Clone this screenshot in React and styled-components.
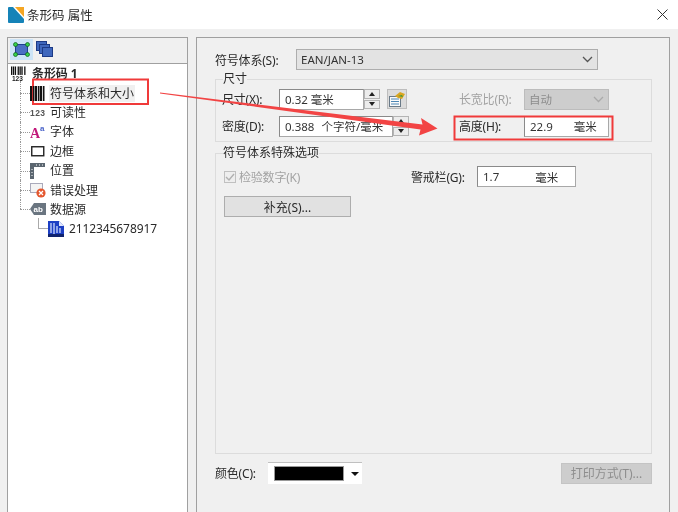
import React from "react";
import styled, { createGlobalStyle } from "styled-components";

const Global = createGlobalStyle`
  html, body { margin: 0; padding: 0; background: #f0f0f0; }
  body { font-family: "Noto Sans", "Noto Sans CJK SC", sans-serif; font-size: 12px; color: #2a2a2a; }
`;

const Dialog = styled.div`
  position: relative; width: 678px; height: 512px; overflow: hidden; background: #f0f0f0;
  filter: blur(0.4px);
`;
const TitleBar = styled.header`
  display: flex; align-items: center; height: 29px; padding: 0 10px 0 8px; background: #fff; box-sizing: border-box;
`;
const TitleText = styled.span`margin-left: 3px; font-size: 12.5px; flex: 1;`;
const Body = styled.main`display: flex; gap: 8px; padding: 8px 8px 0 7px;`;
const LeftPane = styled.aside`
  width: 181px; height: 490px; flex: none; box-sizing: border-box; border: 1px solid #a0a0a0; background: #fff;
`;
const Toolbar = styled.div`
  display: flex; align-items: flex-start; gap: 0; height: 26px; box-sizing: border-box; padding: 1px 2px; background: #f0f0f0; border-bottom: 1px solid #a0a0a0;
`;
const ToolButton = styled.div`
  width: 23px; height: 21px; display: flex; align-items: center; justify-content: center;
  background: ${p => (p.$active ? "#cce4f7" : "transparent")};
`;
const Tree = styled.ul`list-style: none; margin: 0; padding: 0 0 0 3px;`;
const Node = styled.li`
  position: relative; height: 19.4px; display: flex; align-items: center;
  padding-left: ${p => ({ 0: 0, 1: 19, 2: 37 }[p.$level])}px;
  font-weight: ${p => (p.$root ? 700 : 400)};
  &::before {
    content: ${p => (p.$level === 1 ? '""' : "none")};
    position: absolute; left: 9px; top: ${p => (p.$first ? "-2px" : "0")};
    height: ${p => (p.$last ? "50%" : "100%")};
    width: 10px; box-sizing: border-box;
    border-left: 1px dotted #999;
  }
  &::after {
    content: ${p => (p.$level === 0 ? "none" : '""')};
    position: absolute; left: ${p => (p.$level === 1 ? 9 : 27)}px; top: ${p => (p.$level === 1 ? "50%" : "-1px")};
    width: 10px; height: ${p => (p.$level === 1 ? "0" : "10px")};
    border-bottom: 1px ${p => (p.$level === 1 ? "dotted #999" : "solid #aaa")};
    border-left: ${p => (p.$level === 2 ? "1px solid #aaa" : "none")};
  }
`;
const NodeIcon = styled.span`
  width: 16px; height: 16px; flex: none; display: flex; align-items: center; justify-content: center; position: relative; z-index: 1;
`;
const NodeLabel = styled.span`
  margin-left: ${p => (p.$tight ? 4 : 3)}px; padding: 0 1px; line-height: 17px;
  letter-spacing: ${p => (p.$tight ? "-0.1px" : "0")};
  background: ${p => (p.$selected ? "#f0f0f0" : "transparent")};
`;

const RightPane = styled.section`
  flex: 1; height: 490px; box-sizing: border-box; padding: 11px 17px 0 18px; border: 1px solid #a0a0a0; display: flex; flex-direction: column;
`;
const SymbolRow = styled.div`display: flex; align-items: center; height: 21px;`;
const Label = styled.label`
  flex: none; width: ${p => p.$w}px; color: ${p => (p.$disabled ? "#a3a3a3" : "#2a2a2a")}; white-space: nowrap; letter-spacing: -0.2px;
`;
const Select = styled.div`
  display: flex; align-items: center; justify-content: space-between; box-sizing: border-box;
  width: ${p => p.$w}px; height: 21px; padding: 0 4px;
  background: ${p => (p.$muted ? "#cdcdcd" : "#e3e3e3")}; border: 1px solid ${p => (p.$muted ? "#bcbcbc" : "#adadad")};
  color: ${p => (p.$muted ? "#8c8c8c" : "#333")}; font-size: 11.5px;
`;
const Group = styled.fieldset`
  margin: ${p => p.$top}px 0 0; padding: ${p => p.$pad}; height: ${p => p.$h}px; box-sizing: border-box; min-width: 0;
  border: 1px solid #dcdcdc;
`;
const Legend = styled.legend`padding: 0; margin-left: ${p => p.$inset}px; line-height: 16px; background: #f0f0f0;`;
const SizeGrid = styled.div`display: grid; grid-template-columns: 237px 1fr; row-gap: 7px;`;
const FieldRow = styled.div`display: flex; align-items: center; height: 20px;`;
const Input = styled.div`
  display: flex; align-items: center; box-sizing: border-box; width: ${p => p.$w}px; height: 21px; padding-left: 5px;
  background: #fff; border: 1px solid #a8a8a8; border-top-color: #8a8a8a; border-left-color: #8a8a8a; white-space: nowrap; font-size: 11.5px; color: #333;
`;
const Unit = styled.span`margin-left: ${p => p.$gap}px;`;
const Spinner = styled.div`
  width: 16px; height: 20px; flex: none; display: flex; flex-direction: column; gap: 1px; box-sizing: border-box;
`;
const SpinPart = styled.div`
  flex: 1; background: #ececec; border: 1px solid #b4b4b4; display: flex; align-items: center; justify-content: center;
  &::after {
    content: ""; border-left: 3px solid transparent; border-right: 3px solid transparent;
    ${p => (p.$down ? "border-top: 4px solid #222;" : "border-bottom: 4px solid #222;")}
  }
`;
const IconButton = styled.div`
  width: 20px; height: 20px; margin-left: 7px; background: #dcdcdc; border: 1px solid #bdbdbd; box-sizing: border-box; display: flex; align-items: center; justify-content: center;
`;
const OptionRow = styled.div`display: flex; align-items: center; justify-content: space-between; height: 21px; padding: 0 75px 0 8px;`;
const Check = styled.div`display: flex; align-items: center; gap: 3px; color: #a3a3a3; letter-spacing: -0.2px;`;
const CheckBox = styled.span`
  width: 12px; height: 12px; box-sizing: border-box; border: 1px solid #c0c0c0; display: flex; align-items: center; justify-content: center; background: #eee;
`;
const Warning = styled.div`display: flex; align-items: center;`;
const Button = styled.div`
  display: flex; align-items: center; justify-content: center; box-sizing: border-box; height: 21px; width: ${p => p.$w}px;
  background: ${p => (p.$disabled ? "#cdcdcd" : "#e1e1e1")}; color: ${p => (p.$disabled ? "#8e8e8e" : "#2a2a2a")};
  border: 1px solid ${p => (p.$disabled ? "#c4c4c4" : "#adadad")};
`;
const SupplementButton = styled(Button)`margin: 9px 0 0 8px;`;
const FooterRow = styled.div`display: flex; align-items: center; height: 22px; margin-top: 8px;`;
const ColorPicker = styled.div`
  width: 94px; height: 22px; box-sizing: border-box; background: #fff; border-top: 1px solid #c0c0c0; display: flex; align-items: center; padding: 0 0 0 6px; margin-right: auto;
`;
const Swatch = styled.span`width: 70px; height: 15px; background: #000; border: 1px solid #999; box-sizing: border-box;`;
const Caret = styled.span`margin-left: 7px; border-left: 4px solid transparent; border-right: 4px solid transparent; border-top: 4px solid #111;`;
const CloseGlyph = styled.svg`flex: none;`;

const Overlay = styled.svg`position: absolute; inset: 0; pointer-events: none;`;

const Chevron = ({ color = "#555" }) => (
  <svg width="11" height="7" viewBox="0 0 11 7"><path d="M1 1l4.5 4.5L10 1" fill="none" stroke={color} strokeWidth="1.3" /></svg>
);
const Bars = ({ h = 15, w = 16 }) => (
  <svg width={w} height={h} viewBox="0 0 16 15">
    {[0, 3, 5, 8, 10, 13].map((x, i) => <rect key={x} x={x} y="0" width={i % 2 ? 1.5 : 2.2} height="15" fill="#111" />)}
  </svg>
);
const Code = () => (
  <svg width="17" height="16" viewBox="0 0 17 16">
    {[0, 2, 4, 7, 9, 11, 14].map(x => <rect key={x} x={x} y="0" width="1.4" height="9" fill="#111" />)}
    <text x="1" y="15.5" fontSize="7" fontWeight="700" fontFamily="Liberation Sans" fill="#222">123</text>
  </svg>
);
const Digits = () => (
  <svg width="16" height="12" viewBox="0 0 16 12"><text x="0" y="10" fontSize="8.5" fontWeight="700" letterSpacing=".4" fontFamily="Liberation Sans" fill="#555">123</text></svg>
);
const FontIcon = () => (
  <svg width="16" height="16" viewBox="0 0 16 16">
    <text x="0" y="14" fontSize="14" fontWeight="700" fontFamily="Liberation Serif" fill="#c2187a">A</text>
    <text x="10" y="7" fontSize="8" fontWeight="700" fontFamily="Liberation Sans" fill="#4a63c9">a</text>
  </svg>
);
const Border = () => <svg width="14" height="11" viewBox="0 0 14 11"><rect x=".75" y=".75" width="12" height="9" fill="#fff" stroke="#222" strokeWidth="1.4" /></svg>;
const Place = () => (
  <svg width="16" height="16" viewBox="0 0 16 16">
    <path d="M0 0h15v4H4v12H0z" fill="#5b6670" />
    <path d="M6 2h1M9 2h1M12 2h1M2 6v1M2 9v1M2 12v1" stroke="#fff" strokeWidth="1" />
  </svg>
);
const ErrorIcon = () => (
  <svg width="16" height="16" viewBox="0 0 16 16">
    <rect x=".5" y="1.5" width="12" height="9" fill="#f4f4f4" stroke="#aab" />
    <circle cx="11" cy="11" r="4.6" fill="#e4572e" />
    <path d="M9 9l4 4M13 9l-4 4" stroke="#fff" strokeWidth="1.3" />
  </svg>
);
const Source = () => (
  <svg width="16" height="12" viewBox="0 0 16 12">
    <path d="M4 0h12v12H4L0 6z" fill="#6a7580" />
    <text x="3.5" y="9" fontSize="8" fontWeight="700" fontFamily="Liberation Sans" fill="#fff">ab</text>
  </svg>
);
const FileIcon = () => (
  <svg width="16" height="16" viewBox="0 0 16 16">
    <path d="M0 0h11l5 5v11H0z" fill="#1c3fc4" />
    <path d="M11 0l5 5h-5z" fill="#dfe6ff" />
    <path d="M3 2v10M6 2v12M9 5v7M12 7v5" stroke="#dbe4ff" strokeWidth="1.2" />
    <path d="M0 13h16v3H0z" fill="#10236e" />
  </svg>
);
const NodesTool = () => (
  <svg width="17" height="15" viewBox="0 0 17 15">
    <rect x="2.5" y="2.5" width="12" height="10" fill="#4a6fc4" stroke="#1f3f8f" />
    {[[2.5, 2.5], [14.5, 2.5], [2.5, 12.5], [14.5, 12.5]].map(([x, y]) => <circle key={x + "" + y} cx={x} cy={y} r="2" fill="#35d04a" stroke="#0d5a18" strokeWidth=".7" />)}
  </svg>
);
const LayersTool = () => (
  <svg width="17" height="17" viewBox="0 0 17 17">
    {[[0, 0], [3, 3], [6, 6]].map(([x, y]) => <rect key={x} x={x + .5} y={y + .5} width="10" height="9" fill="#3f67bd" stroke="#1c3a86" />)}
  </svg>
);
const PickTool = () => (
  <svg width="16" height="15" viewBox="0 0 16 15">
    <rect x=".5" y="4.5" width="11" height="10" fill="#fafafa" stroke="#6a7a88" />
    <path d="M2 7h8M2 9.5h8M2 12h8" stroke="#4d87b5" />
    <path d="M6 4l5-4 5 2-3 5-4-1z" fill="#d9a520" />
    <path d="M9 4l4-1 1 2z" fill="#3f9a3a" />
  </svg>
);
const Logo = () => (
  <svg width="16" height="16" viewBox="0 0 16 16">
    <rect width="16" height="16" rx="1" fill="#1583b8" />
    <path d="M5 0h11v12z" fill="#fff" />
    <path d="M7 0h9v10z" fill="#f5a623" />
  </svg>
);

export default function App() {
  return (
    <Dialog>
      <Global />
      <TitleBar>
        <Logo />
        <TitleText>条形码 属性</TitleText>
        <CloseGlyph width="11" height="11" viewBox="0 0 11 11"><path d="M.5.5l10 10M10.5.5l-10 10" stroke="#333" /></CloseGlyph>
      </TitleBar>
      <Body>
        <LeftPane>
          <Toolbar>
            <ToolButton $active><NodesTool /></ToolButton>
            <ToolButton><LayersTool /></ToolButton>
          </Toolbar>
          <Tree>
            <Node $level={0} $root><NodeIcon><Code /></NodeIcon><NodeLabel $tight>条形码 1</NodeLabel></Node>
            <Node $level={1} $first><NodeIcon><Bars /></NodeIcon><NodeLabel $selected>符号体系和大小</NodeLabel></Node>
            <Node $level={1}><NodeIcon><Digits /></NodeIcon><NodeLabel>可读性</NodeLabel></Node>
            <Node $level={1}><NodeIcon><FontIcon /></NodeIcon><NodeLabel>字体</NodeLabel></Node>
            <Node $level={1}><NodeIcon><Border /></NodeIcon><NodeLabel>边框</NodeLabel></Node>
            <Node $level={1}><NodeIcon><Place /></NodeIcon><NodeLabel>位置</NodeLabel></Node>
            <Node $level={1}><NodeIcon><ErrorIcon /></NodeIcon><NodeLabel>错误处理</NodeLabel></Node>
            <Node $level={1} $last><NodeIcon><Source /></NodeIcon><NodeLabel>数据源</NodeLabel></Node>
            <Node $level={2}><NodeIcon><FileIcon /></NodeIcon><NodeLabel $tight>2112345678917</NodeLabel></Node>
          </Tree>
        </LeftPane>
        <RightPane>
          <SymbolRow>
            <Label $w={81}>符号体系(S):</Label>
            <Select $w={302}>EAN/JAN-13<Chevron /></Select>
          </SymbolRow>
          <Group $top={1} $h={71} $pad="2px 6px 0">
            <Legend $inset={1}>尺寸</Legend>
            <SizeGrid>
              <FieldRow>
                <Label $w={57}>尺寸(X):</Label>
                <Input $w={85}>0.32<Unit $gap={3}>毫米</Unit></Input>
                <Spinner><SpinPart /><SpinPart $down /></Spinner>
                <IconButton><PickTool /></IconButton>
              </FieldRow>
              <FieldRow>
                <Label $w={65} $disabled>长宽比(R):</Label>
                <Select $w={85} $muted>自动<Chevron color="#aaa" /></Select>
              </FieldRow>
              <FieldRow>
                <Label $w={57}>密度(D):</Label>
                <Input $w={114}>0.388<Unit $gap={7}>个字符/毫米</Unit></Input>
                <Spinner><SpinPart /><SpinPart $down /></Spinner>
              </FieldRow>
              <FieldRow>
                <Label $w={65}>高度(H):</Label>
                <Input $w={85}>22.9<Unit $gap={21}>毫米</Unit></Input>
              </FieldRow>
            </SizeGrid>
          </Group>
          <Group $top={3} $h={309} $pad="5px 0 0">
            <Legend $inset={7}>符号体系特殊选项</Legend>
            <OptionRow>
              <Check>
                <CheckBox><svg width="10" height="10" viewBox="0 0 10 10"><path d="M1 5l3 3 5-6" fill="none" stroke="#b0b0b0" strokeWidth="1.4" /></svg></CheckBox>
                检验数字(K)
              </Check>
              <Warning>
                <Label $w={66}>警戒栏(G):</Label>
                <Input $w={99}>1.7<Unit $gap={36}>毫米</Unit></Input>
              </Warning>
            </OptionRow>
            <SupplementButton $w={127}>补充(S)...</SupplementButton>
          </Group>
          <FooterRow>
            <Label $w={53}>颜色(C):</Label>
            <ColorPicker><Swatch /><Caret /></ColorPicker>
            <Button $w={91} $disabled>打印方式(T)...</Button>
          </FooterRow>
        </RightPane>
      </Body>
      <Overlay width="678" height="512" viewBox="0 0 678 512">
        <rect x="33" y="79.5" width="115" height="24.5" fill="none" stroke="#f03a3a" strokeWidth="2" />
        <rect x="454.5" y="116.5" width="158" height="23" fill="none" stroke="#f03a3a" strokeWidth="2" />
        <path d="M160 92.5L422.5 124.5L421 118L437.5 128.5L419 135.5L420.5 129.5L160 93.5z" fill="#f24444" />
      </Overlay>
    </Dialog>
  );
}
